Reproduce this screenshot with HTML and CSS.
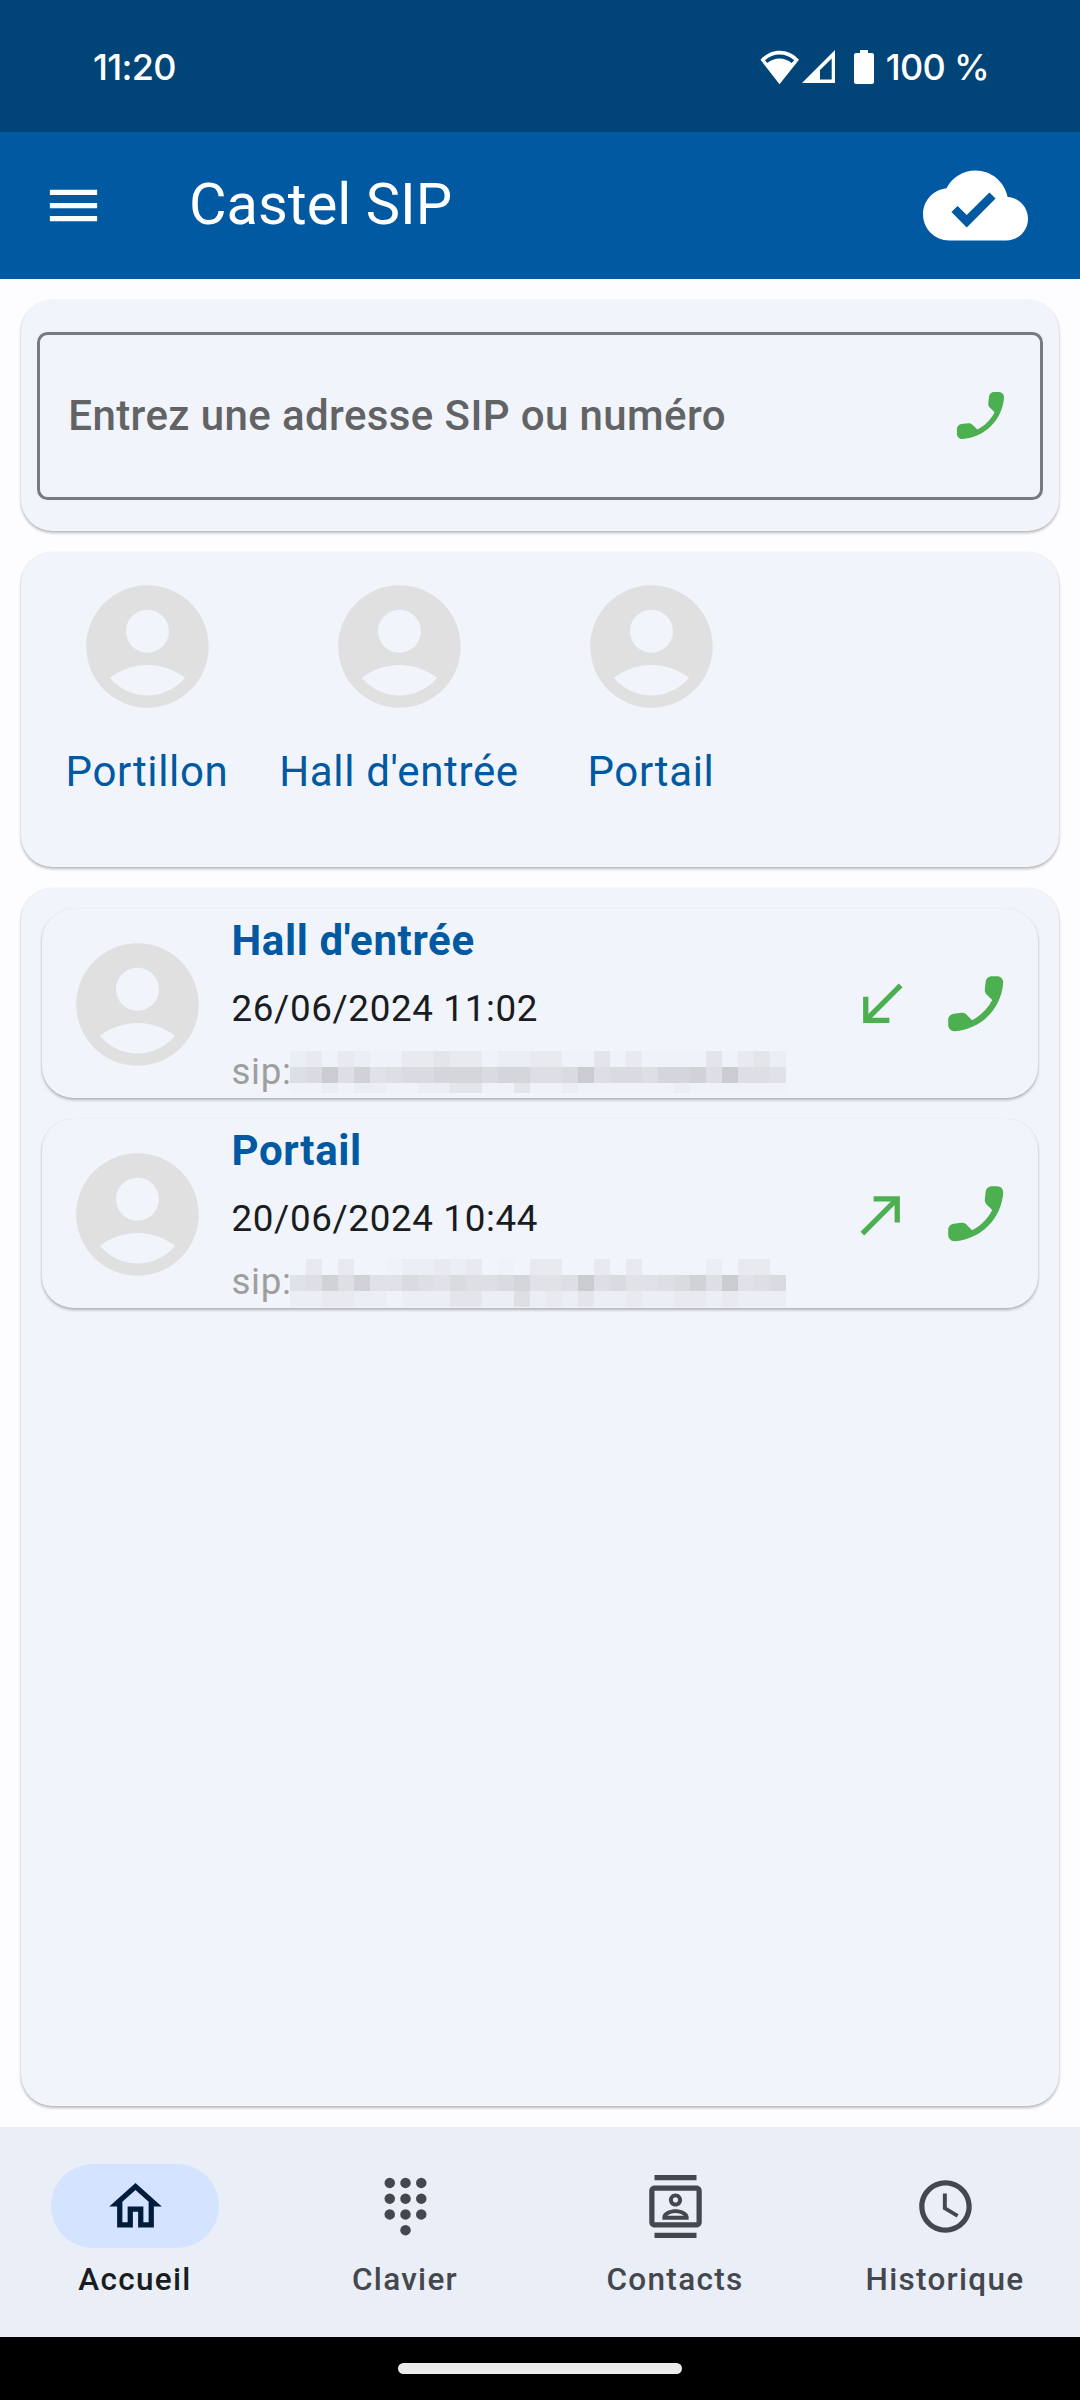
FILE: index.html
```
<!DOCTYPE html>
<html lang="fr">
<head>
  <meta charset="UTF-8" />
  <meta name="viewport" content="width=device-width, initial-scale=1" />
  <title>Castel SIP</title>
  <link rel="stylesheet" href="styles.css">
</head>
<body>
  <svg class="sprite" aria-hidden="true">
    <symbol id="avatar" viewBox="0 0 24 24">
      <path d="M12 2C6.48 2 2 6.48 2 12s4.48 10 10 10 10-4.48 10-10S17.52 2 12 2zM12 6c1.93 0 3.5 1.57 3.5 3.5S13.93 13 12 13s-3.5-1.57-3.5-3.5S10.07 6 12 6zM12 20c-2.03 0-4.43-.82-6.14-2.88C7.55 15.8 9.68 15 12 15s4.45.8 6.14 2.12C16.43 19.18 14.03 20 12 20z"/>
    </symbol>
    <symbol id="phone" viewBox="0 0 24 24">
      <path transform="matrix(-1 0 0 1 24 0)" d="M19.23 15.26l-2.54-.29c-.61-.07-1.21.14-1.64.57l-1.84 1.84c-2.83-1.44-5.15-3.75-6.59-6.59l1.85-1.85c.43-.43.64-1.03.57-1.64l-.29-2.52c-.12-1.01-.97-1.77-1.99-1.77H5.03c-1.13 0-2.07.94-2 2.07.53 8.54 7.36 15.36 15.89 15.89 1.13.07 2.07-.87 2.07-2v-1.73c.01-1.01-.75-1.86-1.76-1.98z"/>
    </symbol>
  </svg>

  <div class="status-bar">
    <span class="time">11:20</span>
    <div class="status-icons">
      <svg class="wifi" viewBox="0 0 40 35">
        <path fill-rule="evenodd" d="M.5 9.7C11-2.4 28.5-2.4 39 9.7L19.5 34.3ZM5 10.3L7.3 13C14.5 7 24.5 7 31.7 13L34.2 10.3C26 2.7 13 2.7 5 10.3Z"/>
      </svg>
      <svg class="signal" viewBox="0 0 34 34">
        <path fill-rule="evenodd" d="M0 33L33 0V33ZM18 20V29.5H29.7V8.5Z"/>
      </svg>
      <svg class="battery" viewBox="0 0 20 34">
        <path d="M6 0h8v3h4a2 2 0 0 1 2 2v27a2 2 0 0 1-2 2H2a2 2 0 0 1-2-2V5a2 2 0 0 1 2-2h4z"/>
      </svg>
      <span class="percent">100 %</span>
    </div>
  </div>

  <header class="app-bar">
    <svg class="icon" viewBox="0 0 24 24"><path d="M3 18h18v-2H3v2zm0-5h18v-2H3v2zm0-7v2h18V6H3z"/></svg>
    <h1>Castel SIP</h1>
    <svg class="cloud" viewBox="0 0 24 24"><path d="M19.35 10.04C18.67 6.59 15.64 4 12 4 9.11 4 6.6 5.64 5.35 8.04 2.34 8.36 0 10.91 0 14c0 3.31 2.69 6 6 6h13c2.76 0 5-2.24 5-5 0-2.64-2.05-4.78-4.65-4.96zM10 17l-3.5-3.5 1.41-1.41L10 14.17 15.18 9l1.41 1.41L10 17z"/></svg>
  </header>

  <main>
    <section class="card dial">
      <div class="field">
        <span>Entrez une adresse SIP ou numéro</span>
        <svg class="icon green"><use href="#phone"/></svg>
      </div>
    </section>

    <section class="card favorites">
      <div class="favorite">
        <svg class="avatar"><use href="#avatar"/></svg>
        <span>Portillon</span>
      </div>
      <div class="favorite">
        <svg class="avatar"><use href="#avatar"/></svg>
        <span>Hall d'entrée</span>
      </div>
      <div class="favorite">
        <svg class="avatar"><use href="#avatar"/></svg>
        <span>Portail</span>
      </div>
    </section>

    <section class="card calls">
      <article class="card call">
        <svg class="avatar"><use href="#avatar"/></svg>
        <div class="infos">
          <h2>Hall d'entrée</h2>
          <p class="date">26/06/2024 11:02</p>
          <p class="sip">sip:<svg class="mask" id="mask1"></svg></p>
        </div>
        <svg class="icon green" viewBox="0 0 24 24"><path d="M20 5.41L18.59 4 7 15.59V9H5v10h10v-2H8.41z"/></svg>
        <svg class="icon-call green"><use href="#phone"/></svg>
      </article>
      <article class="card call">
        <svg class="avatar"><use href="#avatar"/></svg>
        <div class="infos">
          <h2>Portail</h2>
          <p class="date">20/06/2024 10:44</p>
          <p class="sip">sip:<svg class="mask mask-up" id="mask2"></svg></p>
        </div>
        <svg class="icon green" viewBox="0 0 24 24"><path d="M9 5v2h6.59L4 18.59 5.41 20 17 8.41V15h2V5z"/></svg>
        <svg class="icon-call green"><use href="#phone"/></svg>
      </article>
    </section>
  </main>

  <nav>
    <a class="tab active">
      <span class="pill"><svg class="icon" viewBox="0 0 24 24"><path d="M12 5.69l5 4.5V18h-2v-6H9v6H7v-7.81l5-4.5M12 3L2 12h3v8h6v-6h2v6h6v-8h3L12 3z"/></svg></span>
      Accueil
    </a>
    <a class="tab">
      <span class="pill"><svg class="icon" viewBox="0 0 24 24">
        <circle cx="6" cy="3" r="2"/><circle cx="12" cy="3" r="2"/><circle cx="18" cy="3" r="2"/>
        <circle cx="6" cy="9" r="2"/><circle cx="12" cy="9" r="2"/><circle cx="18" cy="9" r="2"/>
        <circle cx="6" cy="15" r="2"/><circle cx="12" cy="15" r="2"/><circle cx="18" cy="15" r="2"/>
        <circle cx="12" cy="21" r="2"/>
      </svg></span>
      Clavier
    </a>
    <a class="tab">
      <span class="pill"><svg class="icon" viewBox="0 0 24 24"><path d="M4 0h16v2H4zM4 22h16v2H4zM20 4H4c-1.1 0-2 .9-2 2v12c0 1.1.9 2 2 2h16c1.1 0 2-.9 2-2V6c0-1.1-.9-2-2-2zm0 14H4V6h16v12zM12 12c1.38 0 2.5-1.12 2.5-2.5S13.38 7 12 7 9.5 8.12 9.5 9.5 10.62 12 12 12zm0-3.5c.55 0 1 .45 1 1s-.45 1-1 1-1-.45-1-1 .45-1 1-1zm5 7.49C17 13.9 13.69 13 12 13s-5 .9-5 2.99V17h10v-1.01zm-8.19-.49c.61-.52 2.03-1 3.19-1 1.17 0 2.59.48 3.2 1H8.81z"/></svg></span>
      Contacts
    </a>
    <a class="tab">
      <span class="pill"><svg class="icon" viewBox="0 0 24 24"><path d="M11.99 2C6.47 2 2 6.48 2 12s4.47 10 9.99 10C17.52 22 22 17.52 22 12S17.52 2 11.99 2zM12 20c-4.42 0-8-3.58-8-8s3.58-8 8-8 8 3.58 8 8-3.58 8-8 8zm.5-13H11v6l5.25 3.15.75-1.23-4.5-2.67z"/></svg></span>
      Historique
    </a>
  </nav>

  <div class="gesture-bar"><span></span></div>

  <script>
    // one letter per 16px block, from light to dark
    const tons = {
      ".": "none", a: "#eff2f9", b: "#eceef5", c: "#e8eaef", d: "#e3e5ea",
      e: "#e1e2e7", f: "#dddfe3", g: "#dadbdf", h: "#d5d6db", i: "#d1d1d6", j: "#cbcbd0"
    };

    function masquer(id, lignes) {
      const svg = document.getElementById(id);
      lignes.forEach((ligne, y) => {
        [...ligne].forEach((ton, x) => {
          const r = document.createElementNS("http://www.w3.org/2000/svg", "rect");
          r.setAttribute("x", x * 16);
          r.setAttribute("y", y * 16);
          r.setAttribute("width", 16);
          r.setAttribute("height", 16);
          r.setAttribute("fill", tons[ton]);
          svg.appendChild(r);
        });
      });
    }

    masquer("mask1", [
      "bcacbaaccdccabbccaadacaaaadacdb",
      "fgjfiefgghhhghhffgjfggfhhifjffe",
      "aababbaabbddaadaabaaaaaabaaaaaa"
    ]);
    masquer("mask2", [
      ".c.c..abbcbc.a.cc..c.c....b.cc.",
      "efifieegfegffgheefjfgeefgifjefg",
      "bbccbbabbbddbbfbcbdbbcbbccbcbbb"
    ]);
  </script>
</body>
</html>
```
FILE: styles.css
```
* {
  box-sizing: border-box;
}

body {
  width: 1080px;
  height: 2400px;
  margin: 0;
  display: flex;
  flex-direction: column;
  background: #fdfcff;
  font-family: Roboto, sans-serif;
  color: #191c20;
}

h1, h2, p {
  margin: 0;
}

svg {
  display: block;
  flex: none;
  fill: currentColor;
}

.sprite {
  position: absolute;
  width: 0;
  height: 0;
}

.icon {
  width: 63px;
  height: 63px;
}

.green {
  color: #4caf50;
}

.avatar {
  width: 147px;
  height: 147px;
  color: #e0e0e0;
}

.status-bar {
  height: 132px;
  padding: 2px 91px 0 93px;
  display: flex;
  align-items: center;
  justify-content: space-between;
  background: #004478;
  color: #fff;
  font-family: Inter, sans-serif;
  font-size: 36px;
  font-weight: 500;
  letter-spacing: -0.7px;
}

.status-icons {
  display: flex;
  align-items: center;
}

.wifi {
  width: 40px;
  height: 35px;
}

.signal {
  width: 34px;
  height: 34px;
  margin-left: 2px;
}

.battery {
  width: 20px;
  height: 34px;
  margin: 0 12px 0 18px;
}

.app-bar {
  height: 147px;
  padding: 0 52px 0 42px;
  display: flex;
  align-items: center;
  background: #0059a1;
  color: #fff;
}

.app-bar h1 {
  flex: 1;
  margin-left: 84px;
  padding-bottom: 3px;
  font-size: 57.75px;
  font-weight: 400;
}

.cloud {
  width: 105px;
  height: 105px;
}

main {
  flex: 1;
  padding: 21px;
  display: flex;
  flex-direction: column;
  gap: 21px;
}

.card {
  background: #f1f4fb;
  border-radius: 31.5px;
  box-shadow: 0 2px 3px rgba(0, 0, 0, 0.27), 0 0 2px rgba(0, 0, 0, 0.05);
}

.dial {
  height: 231px;
  padding: 31.5px 15.75px;
}

.field {
  height: 168px;
  padding: 0 28.5px;
  display: flex;
  align-items: center;
  justify-content: space-between;
  border: 3px solid #777a82;
  border-radius: 10.5px;
  color: #616365;
  font-size: 42px;
  font-weight: 500;
  letter-spacing: 0.4px;
}

.favorites {
  height: 315px;
  padding-top: 21px;
  display: flex;
}

.favorite {
  width: 252px;
  display: flex;
  flex-direction: column;
  align-items: center;
  gap: 20px;
  color: #0059a1;
  font-size: 42px;
  line-height: 63px;
  letter-spacing: 0.65px;
  white-space: nowrap;
}

.calls {
  flex: 1;
  padding: 21px;
  display: flex;
  flex-direction: column;
  gap: 21px;
}

.call {
  height: 189px;
  padding: 1px 26px 0 21.5px;
  display: flex;
  align-items: center;
}

.infos {
  flex: 1;
  align-self: flex-start;
  margin: -1px 0 0 21px;
}

.infos h2 {
  color: #0059a1;
  font-size: 42px;
  line-height: 63px;
  letter-spacing: 0.65px;
}

.infos p {
  height: 63px;
  padding-top: 10.5px;
  font-size: 36.75px;
  line-height: 52.5px;
  letter-spacing: 0.65px;
}

.infos .sip {
  display: flex;
  color: #9e9e9e;
}

.mask {
  width: 496px;
  height: 42px;
  margin: 5px 0 0 -1.5px;
  shape-rendering: crispEdges;
}

.mask-up {
  height: 48px;
  margin-top: 3px;
}

.icon-call {
  width: 73.5px;
  height: 73.5px;
  margin-left: 26px;
}

nav {
  height: 210px;
  padding-top: 1px;
  display: flex;
  background: #eaeef6;
}

.tab {
  flex: 1;
  display: flex;
  flex-direction: column;
  align-items: center;
  justify-content: center;
  gap: 10.5px;
  color: #44474e;
  font-size: 31.5px;
  font-weight: 500;
  line-height: 42px;
  letter-spacing: 1.3px;
}

.pill {
  width: 168px;
  height: 84px;
  display: flex;
  align-items: center;
  justify-content: center;
  border-radius: 42px;
}

.active {
  color: #191c20;
}

.active .pill {
  background: #d4e3ff;
  color: #001c3a;
}

.gesture-bar {
  height: 63px;
  display: flex;
  align-items: center;
  justify-content: center;
  background: #000;
}

.gesture-bar span {
  width: 284px;
  height: 11px;
  border-radius: 5.5px;
  background: #ececec;
}
```
